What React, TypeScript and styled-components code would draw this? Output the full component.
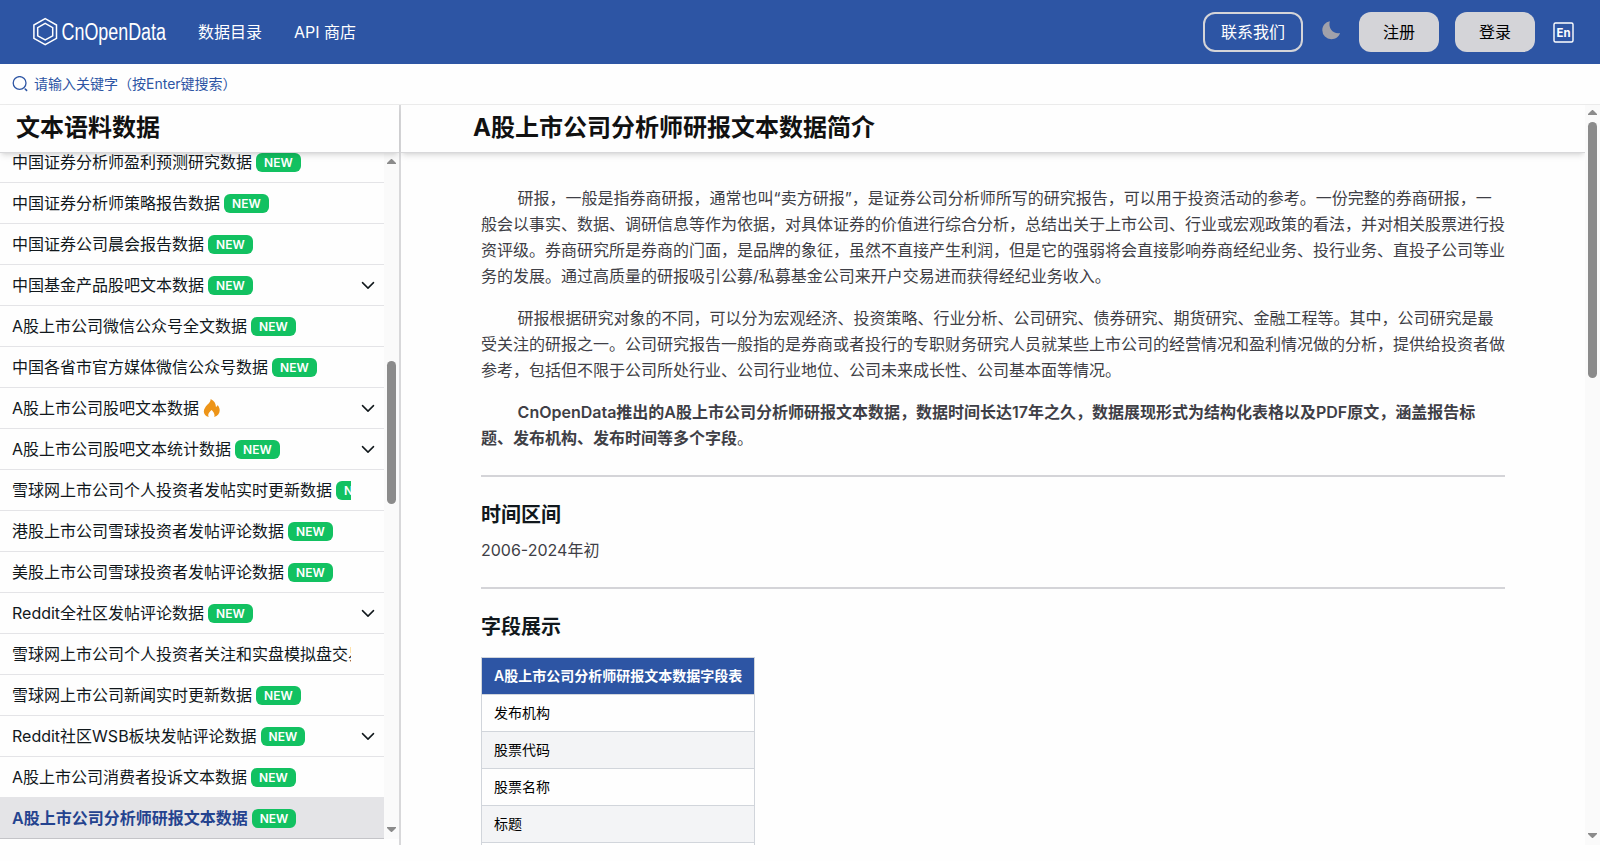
import React from "react";
import styled, { createGlobalStyle, css } from "styled-components";

const Global = createGlobalStyle`
  *, *::before, *::after { box-sizing: border-box; }
  body { margin: 0; background: #fefefe; overflow: hidden; }
  body, button { font-family: Inter, "Noto Sans CJK SC", sans-serif; }
  h1, h2, h3, p, ul { margin: 0; padding: 0; }
  strong { font-weight: 600; }
`;

const Page = styled.div`
  display: flex;
  flex-direction: column;
  height: 861px;
  color: #11181c;
  font-size: 16px;
  line-height: 24px;
`;

const Header = styled.header`
  display: flex;
  align-items: center;
  height: 64px;
  flex: none;
  padding: 0 26px 0 32px;
  background: #2d55a4;
  color: #fff;
`;

const Brand = styled.div`
  display: flex;
  align-items: center;
  width: 134px;
  height: 32px;
  svg { overflow: visible; }
`;

const NavLink = styled.a`
  margin-left: 32px;
  white-space: nowrap;
`;

const Actions = styled.div`
  display: flex;
  align-items: center;
  margin-left: auto;
`;

const Button = styled.button<{ $outline?: boolean }>`
  height: 40px;
  width: ${(p) => (p.$outline ? 100 : 80)}px;
  padding: 0;
  border-radius: 12px;
  border: ${(p) => (p.$outline ? "2px solid #d4d4d8" : "0")};
  background: ${(p) => (p.$outline ? "transparent" : "#d4d4d8")};
  color: ${(p) => (p.$outline ? "#fff" : "#000")};
  font-size: 16px;
  line-height: 24px;
  & + & { margin-left: 16px; }
`;

const MoonIcon = styled.svg`
  margin: 0 17px 4px 18px;
`;

const LangIcon = styled.svg`
  margin-left: 17px;
`;

const SearchBar = styled.div`
  display: flex;
  align-items: center;
  flex: none;
  height: 41px;
  padding: 0 12px 1px;
  gap: 6px;
  border-bottom: 1px solid #ebebeb;
  color: #2d55a4;
  font-size: 14px;
  line-height: 20px;
`;

const Body = styled.div`
  display: flex;
  flex: none;
  height: 740px;
`;

const Sidebar = styled.aside`
  display: flex;
  flex-direction: column;
  width: 401px;
  border-right: 2px solid #d8d8da;
`;

const TitleBar = styled.div<{ $indent: number; $weight: number }>`
  position: relative;
  z-index: 1;
  flex: none;
  height: 48px;
  padding: 7px 0 0 ${(p) => p.$indent}px;
  border-bottom: 1px solid #d8d8da;
  background: #fefefe;
  box-shadow: 0 4px 6px -1px rgba(0, 0, 0, 0.1), 0 2px 4px -2px rgba(0, 0, 0, 0.1);
  color: #111;
  font-weight: ${(p) => p.$weight};
  font-size: 24px;
  line-height: 32px;
`;

const ListArea = styled.div`
  display: flex;
  height: 686px;
  overflow: hidden;
`;

const List = styled.ul`
  flex: 1;
  min-width: 0;
  margin-top: -11px;
  list-style: none;
`;

const Item = styled.li<{ $active?: boolean }>`
  display: flex;
  align-items: center;
  height: 41px;
  padding: 0 9px 0 12px;
  border-bottom: 1px solid #e4e4e7;
  ${(p) =>
    p.$active &&
    css`
      background: #e4e4e7;
      border-bottom-color: #c4c4c8;
      color: #24438f;
      font-weight: 600;
    `}
`;

const ItemLabel = styled.div`
  display: flex;
  align-items: center;
  width: 339px;
  gap: 4px;
  overflow: hidden;
  white-space: nowrap;
`;

const ItemText = styled.span`
  flex: none;
`;

const Badge = styled.span`
  flex: none;
  height: 19px;
  padding: 0 8px;
  border-radius: 6px;
  background: #12c161;
  color: #fff;
  font-size: 12px;
  line-height: 19px;
  font-weight: 600;
`;

const Chevron = styled.svg`
  margin-left: auto;
`;

const Track = styled.div`
  display: flex;
  flex-direction: column;
  align-items: center;
  flex: none;
  width: 15px;
  background: #fafafa;
`;

const Thumb = styled.div<{ $top: number; $height: number }>`
  width: 9px;
  margin-top: ${(p) => p.$top}px;
  height: ${(p) => p.$height}px;
  border-radius: 5px;
  background: #8b8b8b;
`;

const ArrowUp = styled.div<{ $top: number }>`
  width: 9px;
  height: 5px;
  margin-top: ${(p) => p.$top}px;
  background: #8b8b8b;
  clip-path: polygon(45% 0, 55% 0, 100% 80%, 100% 100%, 0 100%, 0 80%);
`;

const ArrowDown = styled.div`
  width: 9px;
  height: 5px;
  margin: auto 0 7px;
  background: #8b8b8b;
  clip-path: polygon(0 0, 100% 0, 100% 20%, 55% 100%, 45% 100%, 0 20%);
`;

const Content = styled.main`
  display: flex;
  flex-direction: column;
  flex: 1;
  min-width: 0;
  overflow: hidden;
`;

const Article = styled.article`
  padding: 32px 80px 0;
  color: #3f3f46;
`;

const Paragraph = styled.p`
  margin-bottom: 16px;
  line-height: 26px;
  text-indent: 36.6px;
`;

const Intro = styled.section`
  padding-bottom: 8px;
`;

const Rule = styled.div`
  height: 2px;
  background: #d4d4d8;
`;

const SectionTitle = styled.h3`
  color: #11181c;
  font-weight: 600;
  font-size: 20px;
  line-height: 28px;
  padding-top: 24px;
`;

const Period = styled.p`
  padding: 8px 0 24px;
  line-height: 26px;
`;

const Table = styled.table`
  margin-top: 16px;
  border-collapse: collapse;
  color: #000;
  font-size: 14px;
  line-height: 20px;
`;

const Th = styled.th`
  height: 37px;
  padding: 0 12px;
  border: 1px solid #d1d5db;
  background: #2d55a4;
  color: #fff;
  font-weight: 600;
`;

const Td = styled.td<{ $shaded?: boolean }>`
  height: 37px;
  padding: 0 12px;
  border: 1px solid #d1d5db;
  background: ${(p) => (p.$shaded ? "#f3f4f6" : "#fefefe")};
`;

const BrandLogo = () => (
  <svg width="134" height="32" viewBox="0 0 134 32" fill="none">
    <g stroke="#fff" strokeWidth="1.5">
      <path d="M13.200 2.700 24.500 9v13.300l-11.300 6.300L1.900 22.300V9z" />
      <path d="M13.200 7.400 20.700 11.600v8.200l-7.500 4.200-7.500-4.200v-8.200z" />
    </g>
    <text x="29.500" y="23.500" textLength="104.500" lengthAdjust="spacingAndGlyphs" fill="#fff" fontSize="23.500" fontFamily="Liberation Sans, Arial, sans-serif">
      CnOpenData
    </text>
  </svg>
);

const SearchIcon = () => (
  <svg width="16" height="16" viewBox="0 0 16 16" fill="none" stroke="#2d55a4" strokeWidth="1.3" strokeLinecap="round">
    <circle cx="7.600" cy="7" r="6.400" />
    <path d="M13.200 13 14.600 14.400" strokeWidth="1.600" />
  </svg>
);

const Flame = () => (
  <svg width="18" height="20" viewBox="0 0 18 20" fill="#ed9418">
    <path d="M7.600 1C8 4.200 4.400 6.200 2.200 9.400c-2.900 4.200-1.100 8.200 3.600 9.700-1.700-3 .5-4.700 2.700-7.200 1.800 1.600 3.900 4.200 2.600 7.200 5.700-1.600 7.400-7.400 3.500-12.200-.3 1-.9 1.700-1.700 1.900C12.900 5.600 11.200 2.600 7.600 1z" />
  </svg>
);

type Row = { text: string; mark?: "new" | "fire"; open?: boolean; active?: boolean };

const rows: Row[] = [
  { text: "中国证券分析师盈利预测研究数据", mark: "new" },
  { text: "中国证券分析师策略报告数据", mark: "new" },
  { text: "中国证券公司晨会报告数据", mark: "new" },
  { text: "中国基金产品股吧文本数据", mark: "new", open: true },
  { text: "A股上市公司微信公众号全文数据", mark: "new" },
  { text: "中国各省市官方媒体微信公众号数据", mark: "new" },
  { text: "A股上市公司股吧文本数据", mark: "fire", open: true },
  { text: "A股上市公司股吧文本统计数据", mark: "new", open: true },
  { text: "雪球网上市公司个人投资者发帖实时更新数据", mark: "new" },
  { text: "港股上市公司雪球投资者发帖评论数据", mark: "new" },
  { text: "美股上市公司雪球投资者发帖评论数据", mark: "new" },
  { text: "Reddit全社区发帖评论数据", mark: "new", open: true },
  { text: "雪球网上市公司个人投资者关注和实盘模拟盘交易数据", mark: "new" },
  { text: "雪球网上市公司新闻实时更新数据", mark: "new" },
  { text: "Reddit社区WSB板块发帖评论数据", mark: "new", open: true },
  { text: "A股上市公司消费者投诉文本数据", mark: "new" },
  { text: "A股上市公司分析师研报文本数据", mark: "new", active: true },
];

const fields = ["发布机构", "股票代码", "股票名称", "标题", "发布时间"];

export default function App() {
  return (
    <Page>
      <Global />
      <Header>
        <Brand><BrandLogo /></Brand>
        <NavLink>数据目录</NavLink>
        <NavLink>API 商店</NavLink>
        <Actions>
          <Button $outline>联系我们</Button>
          <MoonIcon width="21" height="21" viewBox="0 0 21 21" fill="#a1a1aa">
            <path d="M8.800 1.300C4.600 2.100 1.300 5.600 1.300 10.200a9 9 0 0 0 9 9c4.400 0 7.700-2.500 8.800-6.200C12.600 14.400 6.900 8.700 8.800 1.300z" />
          </MoonIcon>
          <Button>注册</Button>
          <Button>登录</Button>
          <LangIcon width="22" height="22" viewBox="0 0 22 22" fill="none">
            <rect x="2" y="2" width="19" height="19" rx="1.500" stroke="#fff" strokeWidth="1.400" />
            <text x="11.500" y="15.800" textAnchor="middle" fill="#fff" fontSize="12" fontWeight="700" textLength="14" lengthAdjust="spacingAndGlyphs" fontFamily="Inter, sans-serif">En</text>
          </LangIcon>
        </Actions>
      </Header>
      <SearchBar>
        <SearchIcon />
        请输入关键字（按Enter键搜索）
      </SearchBar>
      <Body>
        <Sidebar>
          <TitleBar as="h2" $indent={16} $weight={600}>文本语料数据</TitleBar>
          <ListArea>
            <List>
              {rows.map((r) => (
                <Item key={r.text} $active={r.active}>
                  <ItemLabel>
                    <ItemText>{r.text}</ItemText>
                    {r.mark === "new" && <Badge>NEW</Badge>}
                    {r.mark === "fire" && <Flame />}
                  </ItemLabel>
                  {r.open && (
                    <Chevron width="14" height="14" viewBox="0 0 14 14" fill="none" stroke="#11181c" strokeWidth="1.500" strokeLinecap="round" strokeLinejoin="round">
                      <path d="M1.500 4.600 7 10.100l5.500-5.500" />
                    </Chevron>
                  )}
                </Item>
              ))}
            </List>
            <Track>
              <ArrowUp $top={6} />
              <Thumb $top={197} $height={143} />
              <ArrowDown />
            </Track>
          </ListArea>
        </Sidebar>
        <Content>
          <TitleBar as="h1" $indent={72} $weight={700}>A股上市公司分析师研报文本数据简介</TitleBar>
          <Article>
            <Intro>
              <Paragraph>
                研报，一般是指券商研报，通常也叫“卖方研报”，是证券公司分析师所写的研究报告，可以用于投资活动的参考。一份完整的券商研报，一般会以事实、数据、调研信息等作为依据，对具体证券的价值进行综合分析，总结出关于上市公司、行业或宏观政策的看法，并对相关股票进行投资评级。券商研究所是券商的门面，是品牌的象征，虽然不直接产生利润，但是它的强弱将会直接影响券商经纪业务、投行业务、直投子公司等业务的发展。通过高质量的研报吸引公募/私募基金公司来开户交易进而获得经纪业务收入。
              </Paragraph>
              <Paragraph>
                研报根据研究对象的不同，可以分为宏观经济、投资策略、行业分析、公司研究、债券研究、期货研究、金融工程等。其中，公司研究是最受关注的研报之一。公司研究报告一般指的是券商或者投行的专职财务研究人员就某些上市公司的经营情况和盈利情况做的分析，提供给投资者做参考，包括但不限于公司所处行业、公司行业地位、公司未来成长性、公司基本面等情况。
              </Paragraph>
              <Paragraph>
                <strong>CnOpenData推出的A股上市公司分析师研报文本数据，数据时间长达17年之久，数据展现形式为结构化表格以及PDF原文，涵盖报告标题、发布机构、发布时间等多个字段</strong>。
              </Paragraph>
            </Intro>
            <Rule />
            <SectionTitle>时间区间</SectionTitle>
            <Period>2006-2024年初</Period>
            <Rule />
            <SectionTitle>字段展示</SectionTitle>
            <Table>
              <thead>
                <tr><Th>A股上市公司分析师研报文本数据字段表</Th></tr>
              </thead>
              <tbody>
                {fields.map((f, i) => (
                  <tr key={f}><Td $shaded={i % 2 === 1}>{f}</Td></tr>
                ))}
              </tbody>
            </Table>
          </Article>
        </Content>
        <Track>
          <ArrowUp $top={5} />
          <Thumb $top={7} $height={256} />
          <ArrowDown />
        </Track>
      </Body>
    </Page>
  );
}
